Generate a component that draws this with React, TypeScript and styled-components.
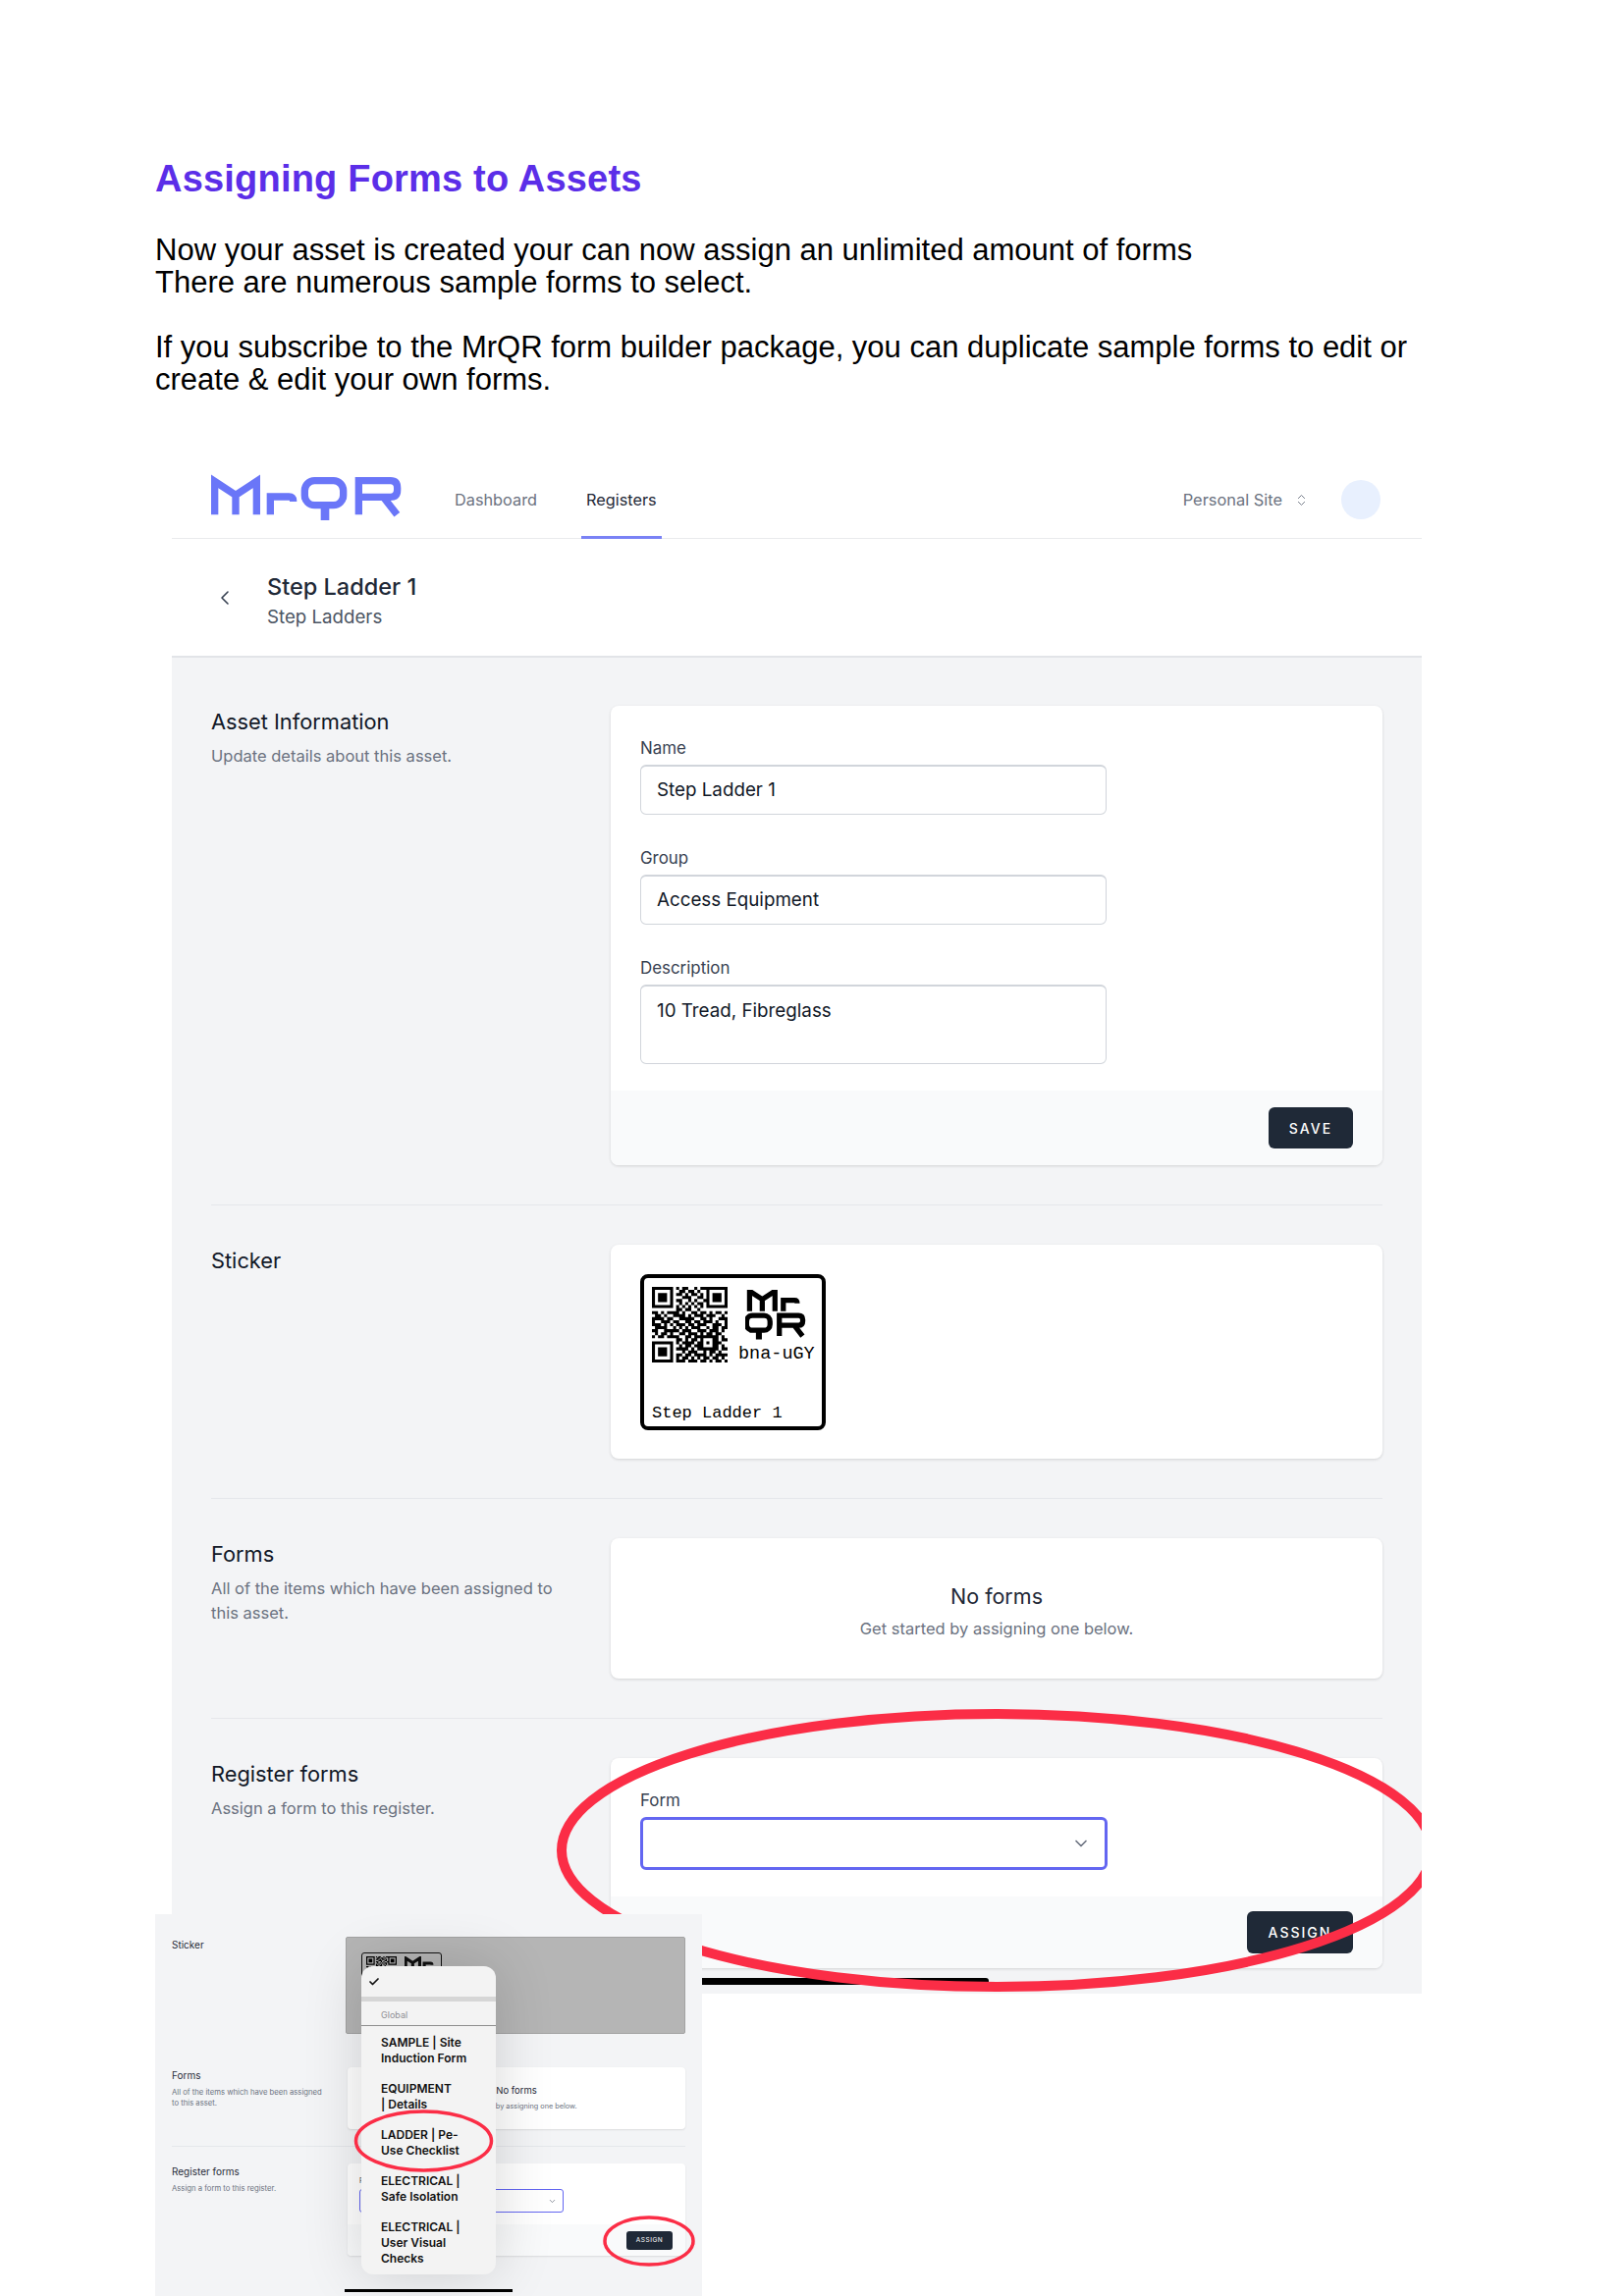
import styled, { createGlobalStyle } from "styled-components";
import { Check, ChevronDown, ChevronLeft, ChevronsUpDown } from "lucide-react";

const GlobalStyle = createGlobalStyle`
  html, body {
    margin: 0;
    padding: 0;
    background: #ffffff;
  }
  * {
    box-sizing: border-box;
  }
`;

const Page = styled.div`
  position: relative;
  width: 1654px;
  height: 2339px;
  overflow: hidden;
  background: #ffffff;
  padding: 158px 0 0 158px;
  font-family: Inter, "Liberation Sans", sans-serif;
`;

const Heading = styled.h1`
  margin: 0 0 32px;
  font-family: "Liberation Sans", Arial, sans-serif;
  font-size: 38px;
  line-height: 48px;
  font-weight: 700;
  letter-spacing: 0.2px;
  color: #5b2ee8;
`;

const Copy = styled.p`
  margin: 0 0 33px;
  width: 1310px;
  font-family: "Liberation Sans", Arial, sans-serif;
  font-size: 31px;
  line-height: 33px;
  color: #000000;
`;

const AppShot = styled.div`
  position: relative;
  width: 1273px;
  margin: 67px 0 0 17px;
`;

const Header = styled.header`
  display: flex;
  align-items: center;
  height: 79px;
  padding: 0 42px 0 39px;
  border-bottom: 1px solid #e9eaec;
`;

const Logo = styled.svg`
  width: 215px;
  height: 65px;
  margin: -4px 38px 0 -9px;
  flex: none;
`;

const Tabs = styled.nav`
  display: flex;
  align-self: stretch;
  gap: 40px;
`;

const Tab = styled.div<{ $active?: boolean }>`
  display: flex;
  align-items: center;
  padding: 2px 5px 0;
  margin-bottom: -1px;
  font-size: 16.3px;
  color: ${(p) => (p.$active ? "#1f2937" : "#6b7280")};
  border-bottom: 3px solid ${(p) => (p.$active ? "#7a82f5" : "transparent")};
`;

const SiteSwitch = styled.div`
  display: flex;
  align-items: center;
  gap: 12px;
  margin-left: auto;
  font-size: 16.4px;
  color: #6b7280;
`;

const Avatar = styled.div`
  width: 40px;
  height: 40px;
  margin-left: 33px;
  border-radius: 50%;
  background: #e8f0fe;
`;

const TitleBar = styled.div`
  display: flex;
  align-items: center;
  gap: 31px;
  height: 121px;
  padding: 0 0 0 42px;
  border-bottom: 2px solid #e2e4e8;
  color: #374151;
`;

const TitleText = styled.div`
  display: flex;
  flex-direction: column;
  gap: 5px;
  padding-top: 7px;
`;

const AssetName = styled.div`
  font-size: 23.5px;
  line-height: 28px;
  font-weight: 500;
  color: #1f2937;
`;

const AssetType = styled.div`
  font-size: 18.7px;
  line-height: 24px;
  color: #4b5563;
`;

const Body = styled.main`
  position: relative;
  padding: 49px 40px 26px;
  background: #f3f4f6;
`;

const Section = styled.section`
  display: grid;
  grid-template-columns: 407px 786px;
`;

const Divider = styled.hr`
  height: 1px;
  margin: 40px 0;
  border: 0;
  background: #e5e7eb;
`;

const SideText = styled.div`
  padding-top: 1px;
`;

const SideTitle = styled.h2`
  margin: 0;
  font-size: 21.8px;
  line-height: 30px;
  font-weight: 400;
  color: #111827;
`;

const SideDesc = styled.p`
  width: 360px;
  margin: 8px 0 0;
  font-size: 16.5px;
  line-height: 25px;
  color: #6b7280;
`;

const Card = styled.div`
  display: flex;
  flex-direction: column;
  border-radius: 8px;
  background: #ffffff;
  box-shadow: 0 1px 3px rgba(0, 0, 0, 0.14);
  overflow: hidden;
`;

const CardBody = styled.div<{ $bottom: number }>`
  display: flex;
  flex-direction: column;
  gap: 32px;
  padding: 31px 30px ${(p) => p.$bottom}px;
`;

const CardFooter = styled.div<{ $height: number }>`
  display: flex;
  align-items: center;
  justify-content: flex-end;
  height: ${(p) => p.$height}px;
  padding: 0 30px;
  background: #f9fafb;
`;

const Label = styled.div`
  margin-bottom: 5px;
  font-size: 16.9px;
  line-height: 24px;
  color: #374151;
`;

const Field = styled.div<{ $tall?: boolean }>`
  width: 475px;
  height: ${(p) => (p.$tall ? 81 : 51)}px;
  padding: ${(p) => (p.$tall ? "12px" : "0")} 16px 0;
  display: flex;
  align-items: ${(p) => (p.$tall ? "flex-start" : "center")};
  border: 1px solid #d1d5db;
  border-top-width: 2px;
  border-radius: 6px;
  font-size: 18.8px;
  line-height: 26px;
  color: #111827;
`;

const Select = styled.div`
  display: flex;
  align-items: center;
  justify-content: flex-end;
  width: 476px;
  height: 54px;
  padding-right: 14px;
  border: 3px solid #6366f1;
  border-radius: 6px;
  color: #6b7280;
`;

const DarkButton = styled.div<{ $width: number; $height: number }>`
  display: flex;
  align-items: center;
  justify-content: center;
  width: ${(p) => p.$width}px;
  height: ${(p) => p.$height}px;
  border-radius: 6px;
  background: #1f2937;
  color: #ffffff;
  font-size: 14px;
  font-weight: 500;
  letter-spacing: 2px;
`;

const StickerBox = styled.div`
  display: flex;
  flex-direction: column;
  width: 189px;
  height: 159px;
  margin: 30px 0 29px 30px;
  padding: 9px 6px 3px 8px;
  border: 4px solid #000000;
  border-radius: 8px;
  background: #ffffff;
  font-family: "Liberation Mono", "Courier New", monospace;
  color: #000000;
`;

const StickerTop = styled.div`
  display: flex;
  gap: 11px;
`;

const StickerMeta = styled.div`
  display: flex;
  flex-direction: column;
  align-items: center;
  gap: 2px;
  padding-top: 3px;
  font-size: 18.5px;
  line-height: 20px;
  white-space: nowrap;
`;

const StickerName = styled.div`
  margin-top: auto;
  font-size: 17px;
  line-height: 20px;
`;

const Empty = styled.div`
  display: flex;
  flex-direction: column;
  align-items: center;
  justify-content: center;
  gap: 7px;
  height: 143px;
  padding-top: 5px;
  text-align: center;
`;

const EmptyTitle = styled.div`
  font-size: 21.5px;
  line-height: 28px;
  color: #1f2937;
`;

const EmptyText = styled.div`
  font-size: 16.5px;
  line-height: 24px;
  color: #6b7280;
`;

const BlackBar = styled.div`
  position: absolute;
  left: 0;
  bottom: 9px;
  width: 832px;
  height: 7px;
  border-radius: 0 3px 3px 0;
  background: #000000;
`;

const MainRing = styled.svg`
  position: absolute;
  left: 560px;
  top: 1735px;
  width: 888px;
  height: 304px;
`;

const Inset = styled.aside`
  position: absolute;
  left: 158px;
  top: 1950px;
  width: 557px;
  height: 389px;
  overflow: hidden;
  padding: 23px 17px 0;
  background: #f3f4f6;
`;

const MiniSection = styled.div<{ $top?: number }>`
  display: grid;
  grid-template-columns: 177px 346px;
  margin-top: ${(p) => p.$top ?? 0}px;
`;

const MiniTitle = styled.div`
  font-size: 10px;
  line-height: 16px;
  color: #1f2937;
`;

const MiniDesc = styled.div`
  width: 158px;
  margin-top: 4px;
  font-size: 7.7px;
  line-height: 11px;
  color: #6b7280;
`;

const MiniShade = styled.div`
  height: 99px;
  padding: 15px 0 0 15px;
  background: #b5b5b5;
  border: 1px solid #a3a3a3;
  border-radius: 2px;
`;

const MiniSticker = styled.div`
  display: flex;
  gap: 8px;
  width: 82px;
  height: 67px;
  padding: 3px 4px;
  border: 1.5px solid #111111;
  border-radius: 3px;
`;

const MiniCard = styled(Card)<{ $height: number }>`
  height: ${(p) => p.$height}px;
  margin-left: 2px;
  border-radius: 4px;
  box-shadow: 0 1px 2px rgba(0, 0, 0, 0.1);
`;

const MiniEmpty = styled.div`
  display: flex;
  flex-direction: column;
  align-items: center;
  gap: 4px;
  padding-top: 17px;
`;

const MiniEmptyTitle = styled.div`
  font-size: 9.5px;
  line-height: 13px;
  color: #1f2937;
`;

const MiniEmptyText = styled.div`
  font-size: 7.3px;
  line-height: 11px;
  white-space: nowrap;
  color: #6b7280;
`;

const MiniRule = styled.div`
  height: 1px;
  margin: 17px 0;
  background: #e5e7eb;
`;

const MiniFormBody = styled.div`
  flex: 1;
  padding: 10px 0 0 12px;
`;

const MiniLabel = styled.div`
  font-size: 7px;
  line-height: 16px;
  color: #374151;
`;

const MiniSelect = styled.div`
  display: flex;
  align-items: center;
  justify-content: flex-end;
  width: 208px;
  height: 24px;
  padding-right: 6px;
  border: 1px solid #6366f1;
  border-radius: 3px;
  color: #6b7280;
`;

const MiniFooter = styled.div`
  display: flex;
  align-items: center;
  justify-content: flex-end;
  height: 32px;
  padding-right: 13px;
  background: #f9fafb;
`;

const MiniButton = styled.div`
  display: flex;
  align-items: center;
  justify-content: center;
  width: 47px;
  height: 19px;
  border-radius: 3px;
  background: #1f2937;
  color: #ffffff;
  font-size: 6.5px;
  letter-spacing: 0.5px;
`;

const Menu = styled.div`
  position: absolute;
  left: 210px;
  top: 53px;
  width: 137px;
  height: 314px;
  border-radius: 12px;
  background: #f3f3f3;
  box-shadow: 0 0 60px rgba(0, 0, 0, 0.16);
  color: #111111;
`;

const MenuCheck = styled.div`
  display: flex;
  align-items: center;
  height: 31px;
  padding-left: 7px;
`;

const MenuBand = styled.div`
  height: 5px;
  background: #d6d6d6;
`;

const MenuGroup = styled.div`
  height: 25px;
  padding: 7px 0 0 20px;
  border-bottom: 1px solid #8e8e8e;
  font-size: 9px;
  line-height: 14px;
  color: #8e8e93;
`;

const MenuItems = styled.div`
  display: flex;
  flex-direction: column;
  gap: 15px;
  padding: 9px 0 0 20px;
`;

const MenuItem = styled.div`
  font-size: 12px;
  line-height: 16px;
  font-weight: 600;
  white-space: pre-line;
`;

const HomeBar = styled.div`
  position: absolute;
  left: 193px;
  top: 382px;
  width: 171px;
  height: 3px;
  background: #000000;
`;

const InsetRings = styled.svg`
  position: absolute;
  left: 0;
  top: 0;
  width: 557px;
  height: 389px;
  pointer-events: none;
`;

const QR_ROWS = [
  "1111111010110010111111111",
  "1000001001101101001000001",
  "1011101011010110101011101",
  "1011101000111001101011101",
  "1011101011001010011011101",
  "1000001001010101101000001",
  "1111111010101010101111111",
  "0000000011011001000000000",
  "1101011110100110110101101",
  "0110100111101011101110010",
  "1111011001111100110100111",
  "1001110110011011011101001",
  "1110101011101101110011101",
  "0111100101010111001011011",
  "1100111110111001110111010",
  "0101101001101110101101100",
  "1011011110011011111111010",
  "0000000011010110100011011",
  "1111111010111101101011100",
  "1000001001011011100011010",
  "1011101011110101111111011",
  "1011101000101110010110100",
  "1011101011011011110101111",
  "1000001010110101011011010",
  "1111111011101110110101101",
];

const qrPath = QR_ROWS.map((row, y) =>
  row
    .split("")
    .map((cell, x) => (cell === "1" ? `M${x} ${y}h1v1h-1z` : ""))
    .join("")
).join("");

const QrCode = ({ size }: { size: number }) => (
  <svg width={size} height={size} viewBox="0 0 25 25" style={{ flex: "none" }}>
    <path d={qrPath} fill="#000000" />
  </svg>
);

// letters of the logo, 0-645 wide in the same units as the header mark
const MarkMr = ({ weight }: { weight: number }) => (
  <g fill="none" stroke="currentColor" strokeWidth={weight}>
    <path d="M41 148V46L105 88L169 46V148M105 88V148" />
    <path d="M211 148V93H268Q281 93 281 108" />
  </g>
);

const MarkQr = ({ weight }: { weight: number }) => (
  <g fill="none" stroke="currentColor" strokeWidth={weight}>
    <rect x="316" y="44" width="118" height="75" rx="30" />
    <path d="M378 108V165" strokeWidth={weight + 4} />
    <path d="M481 148V44H578Q599 44 599 66V72Q599 94 578 94H481M556 94L598 148" />
  </g>
);

const StickerLogo = ({ width }: { width: number }) => (
  <svg width={width} height={width * 0.85} viewBox="25 30 310 265" color="#000000">
    <g transform="translate(5 -10)">
      <MarkMr weight={26} />
    </g>
    <g transform="translate(-285 115)">
      <MarkQr weight={26} />
    </g>
  </svg>
);

const menuLabels = [
  "SAMPLE | Site\nInduction Form",
  "EQUIPMENT\n| Details",
  "LADDER | Pe-\nUse Checklist",
  "ELECTRICAL |\nSafe Isolation",
  "ELECTRICAL |\nUser Visual\nChecks",
];

const App = () => {
  return (
    <Page>
      <GlobalStyle />
      <Heading>Assigning Forms to Assets</Heading>
      <Copy>
        Now your asset is created your can now assign an unlimited amount of forms
        <br />
        There are numerous sample forms to select.
      </Copy>
      <Copy>
        If you subscribe to the MrQR form builder package, you can duplicate sample forms to edit or create &amp; edit your own forms.
      </Copy>

      <AppShot>
        <Header>
          <Logo viewBox="0 0 645 195" color="#6a76f8">
            <MarkMr weight={22} />
            <MarkQr weight={22} />
          </Logo>
          <Tabs>
            <Tab>Dashboard</Tab>
            <Tab $active>Registers</Tab>
          </Tabs>
          <SiteSwitch>
            Personal Site
            <ChevronsUpDown size={15} strokeWidth={1.5} />
          </SiteSwitch>
          <Avatar />
        </Header>

        <TitleBar>
          <ChevronLeft size={24} strokeWidth={1.6} />
          <TitleText>
            <AssetName>Step Ladder 1</AssetName>
            <AssetType>Step Ladders</AssetType>
          </TitleText>
        </TitleBar>

        <Body>
          <Section>
            <SideText>
              <SideTitle>Asset Information</SideTitle>
              <SideDesc>Update details about this asset.</SideDesc>
            </SideText>
            <Card>
              <CardBody $bottom={27}>
                <div>
                  <Label>Name</Label>
                  <Field>Step Ladder 1</Field>
                </div>
                <div>
                  <Label>Group</Label>
                  <Field>Access Equipment</Field>
                </div>
                <div>
                  <Label>Description</Label>
                  <Field $tall>10 Tread, Fibreglass</Field>
                </div>
              </CardBody>
              <CardFooter $height={76}>
                <DarkButton $width={86} $height={42}>SAVE</DarkButton>
              </CardFooter>
            </Card>
          </Section>

          <Divider />

          <Section>
            <SideText>
              <SideTitle>Sticker</SideTitle>
            </SideText>
            <Card>
              <StickerBox>
                <StickerTop>
                  <QrCode size={77} />
                  <StickerMeta>
                    <StickerLogo width={63} />
                    bna-uGY
                  </StickerMeta>
                </StickerTop>
                <StickerName>Step Ladder 1</StickerName>
              </StickerBox>
            </Card>
          </Section>

          <Divider />

          <Section>
            <SideText>
              <SideTitle>Forms</SideTitle>
              <SideDesc>All of the items which have been assigned to this asset.</SideDesc>
            </SideText>
            <Card>
              <Empty>
                <EmptyTitle>No forms</EmptyTitle>
                <EmptyText>Get started by assigning one below.</EmptyText>
              </Empty>
            </Card>
          </Section>

          <Divider />

          <Section>
            <SideText>
              <SideTitle>Register forms</SideTitle>
              <SideDesc>Assign a form to this register.</SideDesc>
            </SideText>
            <Card>
              <CardBody $bottom={27}>
                <div>
                  <Label>Form</Label>
                  <Select>
                    <ChevronDown size={20} strokeWidth={2} />
                  </Select>
                </div>
              </CardBody>
              <CardFooter $height={73}>
                <DarkButton $width={108} $height={43}>ASSIGN</DarkButton>
              </CardFooter>
            </Card>
          </Section>
          <BlackBar />
        </Body>
      </AppShot>

      <MainRing viewBox="0 0 888 304">
        <ellipse cx="455" cy="150" rx="443" ry="139" fill="none" stroke="#fb2d46" strokeWidth="10" />
      </MainRing>

      <Inset>
        <MiniSection>
          <MiniTitle>Sticker</MiniTitle>
          <MiniShade>
            <MiniSticker>
              <QrCode size={31} />
              <svg width="30" height="14" viewBox="30 30 270 125" color="#111111">
                <MarkMr weight={28} />
              </svg>
            </MiniSticker>
          </MiniShade>
        </MiniSection>

        <MiniSection $top={34}>
          <div>
            <MiniTitle>Forms</MiniTitle>
            <MiniDesc>All of the items which have been assigned to this asset.</MiniDesc>
          </div>
          <MiniCard $height={63}>
            <MiniEmpty>
              <MiniEmptyTitle>No forms</MiniEmptyTitle>
              <MiniEmptyText>Get started by assigning one below.</MiniEmptyText>
            </MiniEmpty>
          </MiniCard>
        </MiniSection>

        <MiniRule />

        <MiniSection>
          <div>
            <MiniTitle>Register forms</MiniTitle>
            <MiniDesc>Assign a form to this register.</MiniDesc>
          </div>
          <MiniCard $height={94}>
            <MiniFormBody>
              <MiniLabel>Form</MiniLabel>
              <MiniSelect>
                <ChevronDown size={9} strokeWidth={2} />
              </MiniSelect>
            </MiniFormBody>
            <MiniFooter>
              <MiniButton>ASSIGN</MiniButton>
            </MiniFooter>
          </MiniCard>
        </MiniSection>

        <Menu>
          <MenuCheck>
            <Check size={12} strokeWidth={3.5} />
          </MenuCheck>
          <MenuBand />
          <MenuGroup>Global</MenuGroup>
          <MenuItems>
            {menuLabels.map((label) => (
              <MenuItem key={label}>{label}</MenuItem>
            ))}
          </MenuItems>
        </Menu>
        <HomeBar />

        <InsetRings viewBox="0 0 557 389">
          <ellipse cx="273.5" cy="231" rx="69" ry="30" fill="none" stroke="#fb2d46" strokeWidth="3.5" />
          <ellipse cx="503" cy="333" rx="45" ry="24" fill="none" stroke="#fb2d46" strokeWidth="3.5" />
        </InsetRings>
      </Inset>
    </Page>
  );
};

export default App;
